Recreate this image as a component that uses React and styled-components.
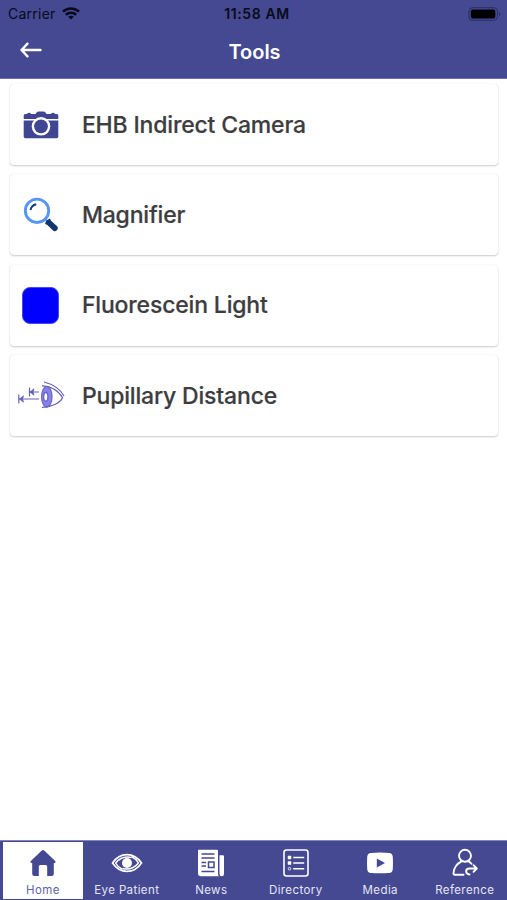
import React from 'react';
import styled, { createGlobalStyle, css } from 'styled-components';

const GlobalStyle = createGlobalStyle`
    * {
        box-sizing: border-box;
    }
    body {
        margin: 0;
        background-color: #fff;
        font-family: Inter, "Liberation Sans", sans-serif;
    }
    svg {
        display: block;
        flex-shrink: 0;
    }
`;

const StyledScreen = styled.div`
    display: flex;
    flex-direction: column;
    width: 100%;
    height: 100vh;
    overflow: hidden;
    background-color: #fff;
`;

const StyledHeader = styled.header`
    flex-shrink: 0;
    height: 79px;
    background-color: #444992;
    border-bottom: 1px solid #6c71ad;
`;

const StyledStatusBar = styled.div`
    display: grid;
    grid-template-columns: 1fr auto 1fr;
    align-items: center;
    height: 27px;
    padding: 0 6px 0 8px;
    color: #090a1c;
    .carrier{
        display: flex;
        align-items: center;
        column-gap: 6px;
        font-size: 14px;
        letter-spacing: 0.25px;
    }
    .time{
        font-size: 14px;
        font-weight: 600;
        letter-spacing: 0.6px;
        padding-left: 5px;
    }
    .battery{
        justify-self: end;
    }
`;

const StyledTitleBar = styled.div`
    display: grid;
    grid-template-columns: 1fr auto 1fr;
    align-items: center;
    height: 50px;
    padding: 0 19px;
    color: #fff;
    .back{
        width: 24px;
        padding: 0;
        margin-top: -5px;
        border: 0;
        background: none;
        color: inherit;
    }
    .title{
        margin: 0;
        padding-left: 2px;
        font-size: 20px;
        font-weight: 600;
        line-height: 24px;
    }
`;

const StyledList = styled.main`
    flex: 1;
    display: flex;
    flex-direction: column;
    row-gap: 9.4px;
    padding: 5px 9.5px 0 10.4px;
`;

const StyledCard = styled.div`
    display: flex;
    align-items: center;
    flex-shrink: 0;
    height: 81px;
    background-color: #fff;
    border-radius: 4px;
    box-shadow: 0 1px 2px rgba(0, 0, 0, 0.2), 0 0 1px rgba(0, 0, 0, 0.14);
    .card-icon{
        display: flex;
        justify-content: center;
        width: 61px;
        flex-shrink: 0;
    }
    .card-title{
        margin: 0 0 0 10.5px;
        color: #3d3d3f;
        font-size: 23px;
        font-weight: 500;
        line-height: 28px;
        letter-spacing: -0.17px;
        -webkit-text-stroke: 0.2px currentColor;
    }
`;

const StyledSwatch = styled.div`
    width: 37px;
    height: 37px;
    border-radius: 8px;
    background-color: #0000fe;
    border: 1px solid #4a48ee;
`;

const StyledTabBar = styled.nav`
    display: grid;
    grid-template-columns: repeat(6, 1fr);
    flex-shrink: 0;
    height: 60px;
    padding: 1px 0;
    background-color: #444992;
    border-top: 1px solid #8185ba;
`;

const StyledTab = styled.div`
    display: flex;
    flex-direction: column;
    align-items: center;
    color: #fff;
    .tab-icon{
        display: flex;
        align-items: center;
        justify-content: center;
        height: 30px;
        margin-top: 6px;
    }
    .tab-label{
        margin-top: 5px;
        font-size: 11.5px;
        line-height: 14px;
        letter-spacing: 0.4px;
        white-space: nowrap;
        color: #e4e5f6;
    }
    ${props => props.$active && css`
        margin: 0 1.5px 0 3px;
        background-color: #fff;
        color: #444992;
        .tab-label{
            color: #6165a4;
        }
    `};
`;

const WifiIcon = () => (
    <svg width="18" height="13" viewBox="0 0 18 13" fill="none" stroke="currentColor" strokeWidth="2.6">
        <path d="M1 4.6C5.5.4 12.5.4 17 4.6" />
        <path d="M3.8 7.8C6.8 5.1 11.2 5.1 14.2 7.8" />
        <path d="M9 12.5 6.2 9.700C7.800 8.300 10.200 8.300 11.800 9.700Z" fill="currentColor" stroke="none" />
    </svg>
);

const BatteryIcon = () => (
    <svg className="battery" width="33" height="14" viewBox="0 0 33 14">
        <rect x="1" y="0.7" width="28.5" height="12.6" rx="3.6" fill="none" stroke="#2b2e63" />
        <rect x="2.800" y="2.5" width="24.5" height="9" rx="2" fill="#000" />
        <path d="M31 5v4c1.6-.7 1.6-3.3 0-4Z" fill="#2b2e63" />
    </svg>
);

const BackIcon = () => (
    <svg width="24" height="18" viewBox="0 0 24 18" fill="none" stroke="currentColor" strokeWidth="2.4" strokeLinecap="round" strokeLinejoin="round">
        <path d="M21.5 9H2.5M8.5 2.700 2.5 9 8.5 15.300" />
    </svg>
);

const CameraIcon = () => (
    <svg width="36" height="28" viewBox="0 0 36 28">
        <path fill="#414693" d="M.7 8V4.500Q.7 3 2.200 3H4Q4.500 1.800 6 1.800T8 3H12.500L14 1Q14.500.5 15.500.5H20.500Q21.500.5 22 1L23.500 3H28Q28.500 1.800 30 1.800T32 3H33.800Q35.300 3 35.300 4.500V8Z" />
        <path fill="#414693" d="M.7 9.500H35.300V25.500Q35.300 27.300 33.500 27.300H2.500Q.7 27.300 .7 25.500Z" />
        <circle cx="18" cy="15.300" r="9.300" fill="#fff" />
        <circle cx="18" cy="15.300" r="6.900" fill="#414693" />
    </svg>
);

const MagnifierIcon = () => (
    <svg width="36" height="36" viewBox="0 0 36 36" fill="none">
        <circle cx="14" cy="13.800" r="11.700" stroke="#5595f6" strokeWidth="2.900" />
        <path d="M7.500 13C8 10 10.200 7.800 13.300 7.200" stroke="#123b7b" strokeWidth="2" />
        <path d="m22.500 22.500 3 3" stroke="#5595f6" strokeWidth="2.200" />
        <path d="m25.800 25.500 6 5.700" stroke="#10366f" strokeWidth="5.800" strokeLinecap="round" />
        <path d="m22.700 27 4.500-4.700" stroke="#10366f" strokeWidth="2" />
    </svg>
);

const PupilIcon = () => (
    <svg width="48" height="30" viewBox="0 0 48 30" fill="none" stroke="#6661b8" strokeWidth="1.200">
        <path d="M1.800 13.500v9M2 18H22M12.500 6.500v9M12.500 11H22" />
        <path d="M6.500 14.800 2.500 18l4 3.200L5.500 18ZM17 7.800 13 11l4 3.200L16 11Z" fill="#6661b8" strokeWidth=".8" />
        <ellipse cx="29.800" cy="15.800" rx="5.200" ry="10.300" fill="#8782e5" stroke="#6a65cb" />
        <ellipse cx="28.800" cy="15.800" rx="2.100" ry="4.300" fill="#fff" stroke="#6a65cb" strokeWidth="1.300" />
        <path d="M25 4.800C33 4.500 41.500 9.500 45.500 16.500C43.500 22 34 26.500 25 26.300" />
        <path d="M27 1C35 3 43 8 47 15" />
    </svg>
);

const HomeIcon = () => (
    <svg width="28" height="28" viewBox="0 0 28 28" fill="currentColor">
        <path d="M14 1Q14.600 1 15.200 1.600L26.200 12Q27.400 13.500 25.700 14H24.800V24.500Q24.800 27 22.300 27H18.200V17.500Q18.200 16 16.700 16H11.300Q9.800 16 9.800 17.500V27H5.700Q3.200 27 3.200 24.500V14H2.300Q.6 13.500 1.800 12L12.800 1.600Q13.400 1 14 1Z" />
    </svg>
);

const EyeIcon = () => (
    <svg width="32" height="22" viewBox="0 0 32 22" fill="none" stroke="currentColor">
        <path d="M1.500 11C9-.2 23-.2 30.500 11C23 22.200 9 22.200 1.500 11Z" strokeWidth="1.700" />
        <path d="M4.500 11C9.500 5 15 4 20.500 5.500M27.500 11C22.500 17 17 18 11.500 16.500" strokeWidth="1.500" />
        <path d="M20.500 4.500C23.500 6 26 8.200 27.500 11M11.500 17.500C8.500 16 6 13.800 4.500 11" strokeWidth="1.500" />
        <circle cx="16" cy="11" r="5" fill="currentColor" stroke="none" />
    </svg>
);

const NewsIcon = () => (
    <svg width="28" height="28" viewBox="0 0 28 28">
        <path fill="#fff" d="M1 1.500Q1 .8 1.800.8H20Q21 .8 21 1.800V25Q21 27.200 22.500 27.200H4Q1 27.200 1 24Z" />
        <path fill="#fff" d="M22.500 6.200H26Q27 6.200 27 7.200V25Q27 27.200 24.800 27.200T22.500 25Z" />
        <path d="M4.500 5h13M4.500 9h13M4.500 13.500h4.500M4.500 17h4.500M4.500 22.500h13" stroke="#444992" strokeWidth="1.500" />
        <rect x="11.500" y="13" width="5.500" height="5.500" fill="none" stroke="#444992" strokeWidth="1.500" />
    </svg>
);

const DirectoryIcon = () => (
    <svg width="28" height="28" viewBox="0 0 28 28" fill="none" stroke="currentColor" strokeWidth="1.600">
        <rect x="2" y="1" width="24" height="26" rx="2.500" />
        <path d="M11.200 8.500h11M11.200 14h11M11.200 19.700h11" />
        <path d="M6 7h3v3H6ZM6 12.500h3v3H6Z" fill="currentColor" strokeWidth=".5" />
        <circle cx="7.500" cy="19.700" r="1.300" strokeWidth=".8" />
    </svg>
);

const MediaIcon = () => (
    <svg width="28" height="22" viewBox="0 0 28 22">
        <path fill="#fff" d="M5 1Q14 .2 23 1Q26.500 1.200 26.800 5Q27.200 11 26.800 17Q26.500 20.800 23 21Q14 21.600 5 21Q1.500 20.800 1.200 17Q.8 11 1.200 5Q1.500 1.200 5 1Z" />
        <path fill="#444992" d="m10.800 6.500 8.200 4.500-8.200 4.500Z" />
    </svg>
);

const ReferenceIcon = () => (
    <svg width="28" height="30" viewBox="0 0 28 30" fill="none" stroke="currentColor" strokeWidth="1.900" strokeLinecap="round" strokeLinejoin="round">
        <circle cx="14" cy="7.800" r="6" />
        <path d="M10.500 13.300C6 15.500 3 20 2.500 25Q2.400 26.700 4 26.700H12.500M17.500 13.300C18.800 13.900 19.800 14.800 20.500 15.800" />
        <path d="M18.500 26.500C14 26 14 20.500 18.500 20.500H25.500M22.500 17.200 25.800 20.500 22.500 23.800" />
    </svg>
);

const tools = [
    { title: 'EHB Indirect Camera', icon: <CameraIcon /> },
    { title: 'Magnifier', icon: <MagnifierIcon /> },
    { title: 'Fluorescein Light', icon: <StyledSwatch /> },
    { title: 'Pupillary Distance', icon: <PupilIcon /> },
];

const tabs = [
    { label: 'Home', icon: <HomeIcon /> },
    { label: 'Eye Patient', icon: <EyeIcon /> },
    { label: 'News', icon: <NewsIcon /> },
    { label: 'Directory', icon: <DirectoryIcon /> },
    { label: 'Media', icon: <MediaIcon /> },
    { label: 'Reference', icon: <ReferenceIcon /> },
];

const App = () => {
    return (
        <StyledScreen>
            <GlobalStyle />
            <StyledHeader>
                <StyledStatusBar>
                    <div className="carrier">
                        <span>Carrier</span>
                        <WifiIcon />
                    </div>
                    <span className="time">11:58 AM</span>
                    <BatteryIcon />
                </StyledStatusBar>
                <StyledTitleBar>
                    <button className="back" aria-label="Back">
                        <BackIcon />
                    </button>
                    <h1 className="title">Tools</h1>
                </StyledTitleBar>
            </StyledHeader>
            <StyledList>
                {tools.map((tool) => (
                    <StyledCard key={tool.title}>
                        <div className="card-icon">{tool.icon}</div>
                        <h3 className="card-title">{tool.title}</h3>
                    </StyledCard>
                ))}
            </StyledList>
            <StyledTabBar>
                {tabs.map((tab) => (
                    <StyledTab key={tab.label} $active={tab.label === 'Home'}>
                        <div className="tab-icon">{tab.icon}</div>
                        <span className="tab-label">{tab.label}</span>
                    </StyledTab>
                ))}
            </StyledTabBar>
        </StyledScreen>
    );
};

export default App;
